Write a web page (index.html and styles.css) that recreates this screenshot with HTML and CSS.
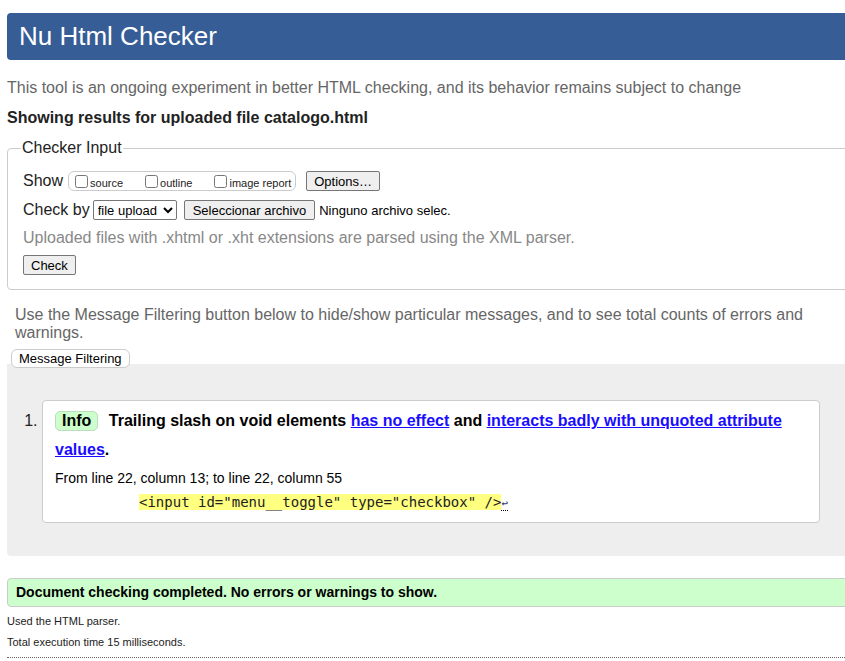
FILE: index.html
```html
<!DOCTYPE html>
<html>
<head>
<meta charset="utf-8">
<title>Nu Html Checker</title>
<link rel="stylesheet" href="styles.css">
</head>
<body>
<div class="page">
  <h1 class="header">Nu Html Checker</h1>
  <p class="intro">This tool is an ongoing experiment in better HTML checking, and its behavior remains subject to change</p>
  <p class="showing">Showing results for uploaded file catalogo.html</p>
  <fieldset class="input">
    <legend>Checker Input</legend>
    <div class="row">
      <span class="lbl">Show</span>
      <span class="group">
        <label><input type="checkbox">source</label>
        <label><input type="checkbox">outline</label>
        <label><input type="checkbox">image report</label>
      </span>
      <button class="btn">Options…</button>
    </div>
    <div class="row">
      <span class="lbl">Check by</span>
      <select class="sel"><option>file upload</option></select>
      <button class="btn file">Seleccionar archivo</button>
      <span class="nofile">Ninguno archivo selec.</span>
    </div>
    <p class="note">Uploaded files with .xhtml or .xht extensions are parsed using the XML parser.</p>
    <button class="btn check">Check</button>
  </fieldset>
  <p class="filter-note">Use the Message Filtering button below to hide/show particular messages, and to see total counts of errors and warnings.</p>
  <button class="filter-btn">Message Filtering</button>
  <div class="results">
    <ol class="list">
      <li class="msg">
        <p class="msg-text"><span class="badge">Info</span> <span class="line1">Trailing slash on void elements <a href="#">has no effect</a> and <a href="#">interacts badly with unquoted attribute</a></span> <span class="line2"><a href="#">values</a>.</span></p>
        <p class="loc">From line 22, column 13; to line 22, column 55</p>
        <p class="extract"><code class="hl">&lt;input id="menu__toggle" type="checkbox" /&gt;</code><span class="lf">↩</span></p>
      </li>
    </ol>
  </div>
  <p class="success">Document checking completed. No errors or warnings to show.</p>
  <p class="small">Used the HTML parser.</p>
  <p class="small">Total execution time 15 milliseconds.</p>
  <div class="dotted"></div>
</div>
</body>
</html>
```
FILE: styles.css
```css
html { overflow: hidden; }
body {
  margin: 0;
  font-family: "Liberation Sans", Arial, sans-serif;
  color: #222;
  background: #fff;
}
.page {
  width: 870px;
  padding: 13px 0 0 7px;
}
.header {
  margin: 0;
  height: 47px;
  background: #365d95;
  color: #fff;
  font-weight: normal;
  font-size: 26px;
  line-height: 47px;
  padding-left: 12px;
  border-radius: 4px 0 0 4px;
}
.intro {
  margin: 18px 0 0;
  font-size: 16px;
  color: #666;
  line-height: 19px;
}
.showing {
  margin: 11px 0 0;
  font-size: 16px;
  font-weight: bold;
  line-height: 19px;
}
.input {
  margin: 12px 0 0;
  border: 1px solid #ccc;
  border-radius: 4px;
  padding: 2px 15px 14px;
}
.input legend {
  font-size: 16px;
  padding: 0 1px;
  margin-left: -2px;
  color: #222;
}
.row {
  display: flex;
  align-items: center;
  height: 20px;
  margin-top: 12px;
}
.row + .row { margin-top: 9px; }
.lbl {
  font-size: 16px;
  margin-right: 3px;
}
.group {
  display: inline-flex;
  align-items: center;
  border: 1px solid #ccc;
  border-radius: 6px;
  height: 18px;
  padding: 0 4px 0 3px;
  font-size: 11px;
  margin-left: 2px;
}
.group label {
  display: inline-flex;
  align-items: center;
  margin-right: 19px;
  padding-top: 3px;
}
.group label:last-child { margin-right: 0; }
.group input {
  margin: -3px 2px 0 3px;
  width: 13px;
  height: 13px;
}
.btn {
  font-family: "Liberation Sans", Arial, sans-serif;
  font-size: 13px;
  background: #efefef;
  border: 1px solid #767676;
  border-radius: 2px;
  height: 20px;
  padding: 0 7px;
  color: #000;
  margin-left: 10px;
}
.sel {
  font-family: "Liberation Sans", Arial, sans-serif;
  font-size: 13px;
  height: 20px;
  width: 84px;
  border: 1px solid #767676;
  border-radius: 2px;
  background: #fff;
  margin-left: 0;
}
.btn.file { margin-left: 7px; padding: 0 8px; }
.nofile { font-size: 13px; margin-left: 4px; color: #000; }
.note {
  margin: 8px 0 0;
  font-size: 16px;
  color: #888;
  line-height: 19px;
}
.btn.check { margin: 8px 0 0; display: block; }
.filter-note {
  margin: 16px 0 0 8px;
  font-size: 16px;
  color: #666;
  line-height: 18px;
  width: 830px;
}
.filter-btn {
  display: block;
  margin: 7px 0 0 4px;
  font-family: "Liberation Sans", Arial, sans-serif;
  font-size: 13px;
  background: #fff;
  border: 1px solid #ccc;
  border-radius: 6px;
  height: 19px;
  padding: 0 7px;
  color: #000;
  position: relative;
  z-index: 1;
}
.results {
  background: #eee;
  margin-top: -4px;
  padding: 36px 0 33px;
  border-radius: 0 0 0 4px;
}
.list {
  margin: 0;
  padding: 0 0 0 35px;
  font-size: 16px;
}
.list li::marker { font-size: 16px; color: #222; }
.msg {
  background: #fff;
  border: 1px solid #ccc;
  border-radius: 4px;
  width: 752px;
  padding: 5px 12px 10px;
}
.msg-text {
  margin: 0;
  font-weight: bold;
  line-height: 29px;
  font-size: 16px;
  color: #000;
}
.msg-text a { color: #1a0dff; }
.badge {
  display: inline-block;
  background: #ccffcc;
  border: 1px solid #bdb;
  border-radius: 5px;
  padding: 0 6px;
  line-height: 18px;
  margin-right: 6px;
}
.loc {
  margin: 5px 0 0;
  font-size: 14px;
  line-height: 18px;
  color: #000;
}
.extract {
  margin: 7px 0 0 84px;
  font-family: "DejaVu Sans Mono", monospace;
  font-size: 14px;
  line-height: 17px;
}
.hl { background: #ffff80; font-family: inherit; font-size: 14px; }
.lf {
  font-size: 11px;
  color: #336;
  border-bottom: 1px dotted #000;
}
.success {
  margin: 22px 0 0;
  background: #ccffcc;
  border: 1px solid #ccc;
  border-radius: 4px 0 0 4px;
  font-weight: bold;
  font-size: 14px;
  line-height: 27px;
  padding-left: 8px;
  color: #000;
}
.small {
  margin: 7px 0 0;
  font-size: 11px;
  line-height: 14px;
  color: #222;
}
.dotted {
  margin-top: 8px;
  border-top: 1px dotted #666;
}
```
